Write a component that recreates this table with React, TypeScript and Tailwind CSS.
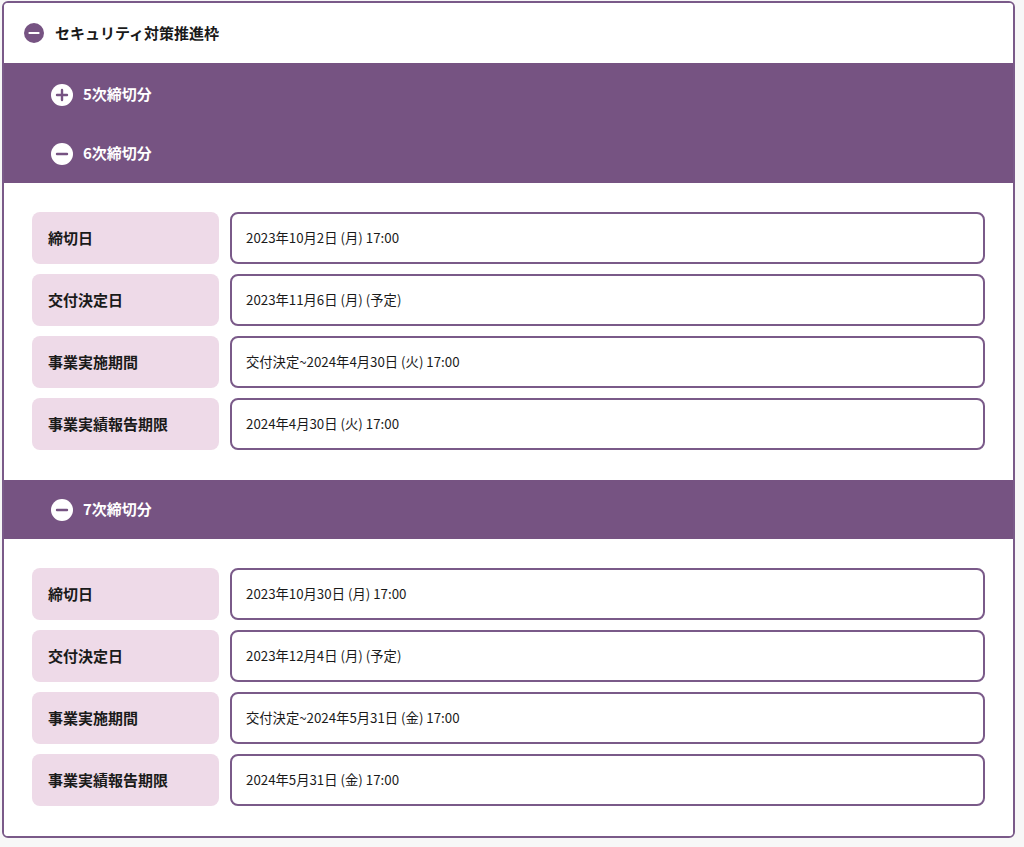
import React from "react";

type Row = { label: string; value: string };

const rounds: { title: string; open: boolean; rows: Row[] }[] = [
  { title: "5次締切分", open: false, rows: [] },
  {
    title: "6次締切分",
    open: true,
    rows: [
      { label: "締切日", value: "2023年10月2日 (月) 17:00" },
      { label: "交付決定日", value: "2023年11月6日 (月) (予定)" },
      { label: "事業実施期間", value: "交付決定~2024年4月30日 (火) 17:00" },
      { label: "事業実績報告期限", value: "2024年4月30日 (火) 17:00" },
    ],
  },
  {
    title: "7次締切分",
    open: true,
    rows: [
      { label: "締切日", value: "2023年10月30日 (月) 17:00" },
      { label: "交付決定日", value: "2023年12月4日 (月) (予定)" },
      { label: "事業実施期間", value: "交付決定~2024年5月31日 (金) 17:00" },
      { label: "事業実績報告期限", value: "2024年5月31日 (金) 17:00" },
    ],
  },
];

function ToggleIcon({ open, dark, size = 22 }: { open: boolean; dark?: boolean; size?: number }) {
  // filled circle with minus / plus
  const fill = dark ? "#765382" : "#ffffff";
  const stroke = dark ? "#ffffff" : "#765382";
  return (
    <svg width={size} height={size} viewBox="0 0 22 22" className="shrink-0">
      <circle cx="11" cy="11" r="11" fill={fill} />
      <line x1="6" y1="11" x2="16" y2="11" stroke={stroke} strokeWidth="2.4" strokeLinecap="round" />
      {!open && (
        <line x1="11" y1="6" x2="11" y2="16" stroke={stroke} strokeWidth="2.4" strokeLinecap="round" />
      )}
    </svg>
  );
}

function RoundHeader({ title, open }: { title: string; open: boolean }) {
  return (
    <div className="flex items-center gap-[10px] h-[59px] pl-[47px]">
      <ToggleIcon open={open} />
      <span className="text-white text-[15px] font-bold">{title}</span>
    </div>
  );
}

function DetailRows({ rows }: { rows: Row[] }) {
  return (
    <div className="flex flex-col gap-[10px] bg-white pt-[29px] pb-[30px] px-[28px]">
      {rows.map((r) => (
        <div key={r.label} className="flex gap-[11px] h-[52px]">
          <div className="w-[187px] shrink-0 bg-[#eedae8] rounded-[8px] flex items-center pl-[16px] text-[15px] font-bold text-[#1a1a1a]">
            {r.label}
          </div>
          <div className="flex-1 border-2 border-[#7a5a89] rounded-[8px] flex items-center pl-[14px] text-[13.3px] text-[#1a1a1a]">
            {r.value}
          </div>
        </div>
      ))}
    </div>
  );
}

export default function App() {
  return (
    <div
      className="w-[1024px] h-[847px] bg-[#f7f7f7] pt-[1px] pl-[2px]"
      style={{ fontFamily: '"Noto Sans CJK JP", "Noto Sans", sans-serif' }}
    >
      <div className="w-[1013px] border-2 border-[#7a5a89] rounded-[6px] bg-white overflow-hidden">
        <div className="flex items-center gap-[11px] h-[60px] pl-[20px] bg-white">
          <ToggleIcon open dark size={20} />
          <span className="text-[15px] font-bold text-[#1a1a1a]">セキュリティ対策推進枠</span>
        </div>
        <div className="bg-[#765382] pt-[2px]">
          <RoundHeader title={rounds[0].title} open={rounds[0].open} />
          <RoundHeader title={rounds[1].title} open={rounds[1].open} />
        </div>
        <DetailRows rows={rounds[1].rows} />
        <div className="bg-[#765382]">
          <RoundHeader title={rounds[2].title} open={rounds[2].open} />
        </div>
        <DetailRows rows={rounds[2].rows} />
      </div>
    </div>
  );
}
